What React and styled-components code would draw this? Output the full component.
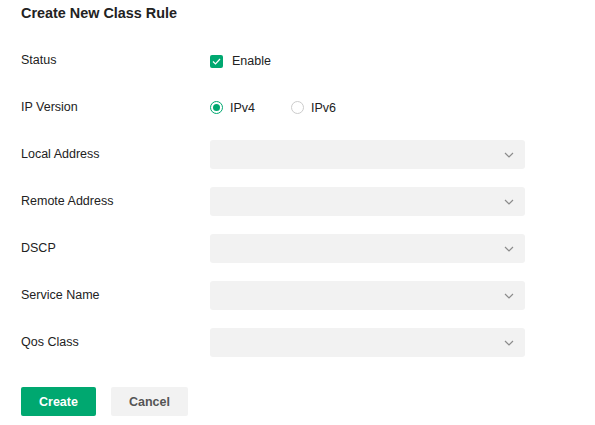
import React from "react";
import styled, { createGlobalStyle } from "styled-components";

const Global = createGlobalStyle`
  html, body { margin: 0; padding: 0; background: #fff; }
  body { font-family: "Liberation Sans", Arial, sans-serif; color: #222; }
`;

const Page = styled.div`
  padding: 5px 21px 0 21px;
  width: 504px;
`;

const Title = styled.h1`
  margin: 0;
  font-size: 14.4px;
  line-height: 16px;
  font-weight: 700;
  color: #222;
`;

const Form = styled.div`
  display: flex;
  flex-direction: column;
  gap: 18px;
  margin-top: 25px;
`;

const Row = styled.div`
  display: flex;
  align-items: center;
  height: 29px;
`;

const Label = styled.div`
  width: 189px;
  flex-shrink: 0;
  font-size: 12.5px;
  color: #222;
  margin-top: -2px;
`;

const Control = styled.div`
  display: flex;
  align-items: center;
  flex: 1;
`;

const Check = styled.span`
  width: 13px;
  height: 13px;
  border-radius: 2px;
  background: #00a870;
  display: inline-flex;
  align-items: center;
  justify-content: center;
  margin-right: 9px;
  margin-top: 2px;
`;

const OptText = styled.span`
  font-size: 12.5px;
  color: #222;
`;

const RadioItem = styled.label`
  display: inline-flex;
  align-items: center;
  margin-right: ${(p) => p.$gap || 0}px;
`;

const Radio = styled.span`
  width: 13px;
  height: 13px;
  box-sizing: border-box;
  border-radius: 50%;
  border: 1px solid ${(p) => (p.$on ? "#00a870" : "#ccc")};
  display: inline-flex;
  align-items: center;
  justify-content: center;
  margin-right: 7px;
  &::after {
    content: "";
    width: 7px;
    height: 7px;
    border-radius: 50%;
    background: ${(p) => (p.$on ? "#00a870" : "transparent")};
  }
`;

const Select = styled.div`
  width: 315px;
  height: 29px;
  border-radius: 3px;
  background: #f2f2f2;
  display: flex;
  align-items: center;
  justify-content: flex-end;
  padding-right: 11px;
  box-sizing: border-box;
`;

const Buttons = styled.div`
  display: flex;
  gap: 15px;
  margin-top: 30px;
`;

const Button = styled.button`
  height: 29px;
  width: ${(p) => p.$w}px;
  border: none;
  border-radius: 2px;
  font-family: "Liberation Sans", Arial, sans-serif;
  font-size: 12.5px;
  font-weight: 700;
  cursor: pointer;
  background: ${(p) => (p.$primary ? "#00a870" : "#f2f2f2")};
  color: ${(p) => (p.$primary ? "#fff" : "#555")};
`;

const Chevron = () => (
  <svg width="10" height="6" viewBox="0 0 10 6">
    <path d="M1 1 L5 5 L9 1" fill="none" stroke="#8c8c8c" strokeWidth="1.2" />
  </svg>
);

const Tick = () => (
  <svg width="9" height="7" viewBox="0 0 9 7">
    <path d="M1 3.5 L3.5 6 L8 1" fill="none" stroke="#fff" strokeWidth="1.2" />
  </svg>
);

const selects = ["Local Address", "Remote Address", "DSCP", "Service Name", "Qos Class"];

export default function App() {
  return (
    <>
      <Global />
      <Page>
        <Title>Create New Class Rule</Title>
        <Form>
          <Row>
            <Label>Status</Label>
            <Control>
              <Check>
                <Tick />
              </Check>
              <OptText>Enable</OptText>
            </Control>
          </Row>
          <Row>
            <Label>IP Version</Label>
            <Control>
              <RadioItem $gap={36}>
                <Radio $on />
                <OptText>IPv4</OptText>
              </RadioItem>
              <RadioItem>
                <Radio />
                <OptText>IPv6</OptText>
              </RadioItem>
            </Control>
          </Row>
          {selects.map((s) => (
            <Row key={s}>
              <Label>{s}</Label>
              <Control>
                <Select>
                  <Chevron />
                </Select>
              </Control>
            </Row>
          ))}
        </Form>
        <Buttons>
          <Button $primary $w={75}>Create</Button>
          <Button $w={77}>Cancel</Button>
        </Buttons>
      </Page>
    </>
  );
}
